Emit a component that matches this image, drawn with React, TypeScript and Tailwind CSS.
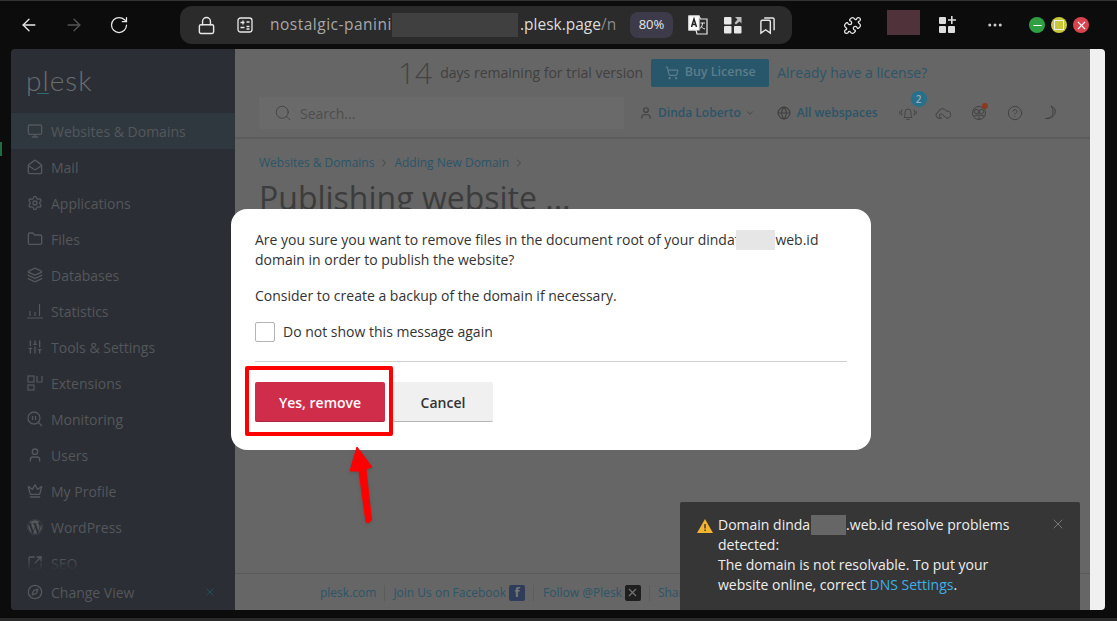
import {
  ArrowLeft,
  ArrowRight,
  RotateCw,
  Lock,
  Puzzle,
  Ellipsis,
  Minus,
  X,
  Monitor,
  MailOpen,
  Settings,
  Folder,
  Layers,
  SlidersVertical,
  User,
  Crown,
  Compass,
  Search,
  ShoppingCart,
  ChevronDown,
  ChevronRight,
  Globe,
  CircleHelp,
  SquareArrowOutUpRight,
} from "lucide-react";
import { FaWordpress } from "react-icons/fa";

const fontStack = "font-['Open_Sans','Noto_Sans',sans-serif]";

function StatsIcon() {
  return (
    <svg viewBox="0 0 16 16" className="w-4 h-4" fill="none" stroke="currentColor" strokeWidth="1.2">
      <path d="M0 15h16M3 13V8M8 13V9M12.500 13V1" />
    </svg>
  );
}

function ExtIcon() {
  return (
    <svg viewBox="0 0 16 16" className="w-4 h-4" fill="none" stroke="currentColor" strokeWidth="1.2">
      <rect x="1" y="1" width="6" height="6" />
      <rect x="1" y="10" width="6" height="5" />
      <path d="M10 1v6h5V1" />
    </svg>
  );
}

function MonitorSearch() {
  return (
    <svg viewBox="0 0 16 16" className="w-4 h-4" fill="none" stroke="currentColor" strokeWidth="1.300">
      <circle cx="7" cy="7" r="6" />
      <path d="M11.500 11.500 15 15M5.500 5v4M8.500 5v4" />
    </svg>
  );
}

function BellIcon() {
  return (
    <svg viewBox="0 0 18 16" className="w-[18px] h-4" fill="none" stroke="currentColor" strokeWidth="1">
      <path d="M5 12.500c1-1.500 1-3 1-5.500a3 3 0 0 1 6 0c0 2.500 0 4 1 5.500zM7.500 14.500h3" />
      <path d="M3 4.500C2 6.500 2 8.500 3 10.500M15 4.500c1 2 1 4 0 6M1 6c-.5 1-.5 2.500 0 3.500M17 6c.5 1 .5 2.500 0 3.500" />
    </svg>
  );
}

function CloudIcon() {
  return (
    <svg viewBox="0 0 18 14" className="w-[17px] h-[14px]" fill="none" stroke="currentColor" strokeWidth="1">
      <path d="M4 12.500a3.200 3.200 0 0 1-.5-6.300A4.500 4.500 0 0 1 12 5a3.800 3.800 0 0 1 1.500 7.500C10 12.500 9 8 6 8c-2 0-2 4.500 1 4.500z" />
    </svg>
  );
}

function OwlIcon() {
  return (
    <svg viewBox="0 0 16 16" className="w-4 h-4" fill="none" stroke="currentColor" strokeWidth="1">
      <circle cx="8" cy="8" r="6.500" />
      <circle cx="5.500" cy="6.500" r="2.200" />
      <circle cx="10.500" cy="6.500" r="2.200" />
      <path d="M8 8.500v6M3 11l4-1M13 11l-4-1" />
    </svg>
  );
}

function CrescentIcon() {
  return (
    <svg viewBox="0 0 16 16" className="w-4 h-4" fill="none" stroke="currentColor" strokeWidth="1">
      <path d="M9 1c3.500 1.500 5 4 4 7.500-1 3-4.500 5.500-9.500 5 4 0 7-2 7.500-5.500C11.300 5.500 10.500 3 9 1z" />
    </svg>
  );
}

const menu = [
  { label: "Mail", icon: <MailOpen size={16} /> },
  { label: "Applications", icon: <Settings size={16} /> },
  { label: "Files", icon: <Folder size={16} /> },
  { label: "Databases", icon: <Layers size={16} /> },
  { label: "Statistics", icon: <StatsIcon /> },
  { label: "Tools & Settings", icon: <SlidersVertical size={16} /> },
  { label: "Extensions", icon: <ExtIcon /> },
  { label: "Monitoring", icon: <MonitorSearch /> },
  { label: "Users", icon: <User size={16} /> },
  { label: "My Profile", icon: <Crown size={16} /> },
  { label: "WordPress", icon: <FaWordpress size={16} /> },
  { label: "SEO", icon: <SquareArrowOutUpRight size={16} /> },
];

function BrowserBar() {
  return (
    <div className="h-[49px] shrink-0 flex items-center text-[#e8e8e8] border-t border-[#333]">
      <ArrowLeft size={20} strokeWidth={1.6} className="ml-[19px]" />
      <ArrowRight size={20} strokeWidth={1.6} className="ml-[25px] text-[#555]" />
      <RotateCw size={20} strokeWidth={1.5} className="ml-[25px]" />
      <div className="ml-[51px] w-[612px] h-[38px] rounded-xl bg-[#2b2b2b] flex items-center">
        <Lock size={19} strokeWidth={1.8} className="ml-[17px]" />
        <svg viewBox="0 0 16 16" className="w-4 h-4 ml-[21px]" fill="none" stroke="currentColor" strokeWidth="1.300">
          <rect x="1" y="1" width="14" height="14" rx="2.500" />
          <path d="M3.500 5.500h4M6 3.500v4M9.500 5h3M3.500 10.500h4M9.500 9.500h3M9.500 12h3" />
        </svg>
        <span className="ml-[17px] text-[15.500px] tracking-[0.5px] text-[#a8a8a8] w-[122px] whitespace-nowrap">nostalgic-panini</span>
        <div className="w-[126px] h-6 bg-[#404040]" />
        <span className="ml-[2px] text-[15.500px] text-[#dcdcdc] whitespace-nowrap">.plesk.page</span>
        <span className="text-[15.500px] text-[#8a8a8a] whitespace-nowrap w-[24px] overflow-hidden">/n</span>
        <div className="w-[43px] h-[26px] rounded-lg bg-[#3d3b4a] flex items-center justify-center text-[13px] text-[#e6e6e6] ml-[5px]">
          80%
        </div>
        <svg viewBox="0 0 20 20" className="w-5 h-5 ml-[15px]" fill="none" stroke="currentColor" strokeWidth="1.200">
          <path d="M1 1h10l1.500 3H19v15H9l-1-4H1z" fill="#2b2b2b" />
          <path d="M1 1h10v14H1z" fill="#fff" />
          <path d="M3.500 12 6 4l2.500 8M4.500 9.500h3" stroke="#222" strokeWidth="1.500" />
          <path d="M12.500 8h4.500M14.500 8c0 3-1.500 5-3 6M13 11c1 1.500 2 2.500 4 3" strokeWidth="1" />
        </svg>
        <svg viewBox="0 0 18 18" className="w-[18px] h-[18px] ml-[16px]" fill="currentColor">
          <rect x="0" y="1" width="7.500" height="7.500" rx="1" />
          <rect x="0" y="10" width="7.500" height="7.500" rx="1" />
          <rect x="10" y="10" width="7.500" height="7.500" rx="1" />
          <path d="M11 1h6.500v6.500L15.500 5.500 12 8.500 10.500 7 13.500 3.500z" fill="#bbb" />
        </svg>
        <svg viewBox="0 0 18 20" className="w-[17px] h-[19px] ml-[17px]" fill="none" stroke="currentColor" strokeWidth="1.500">
          <path d="M2 18V6a1.500 1.500 0 0 1 1.500-1.500h7A1.500 1.500 0 0 1 12 6v12l-5-3.500z" />
          <path d="M5.500 2h9A1.500 1.500 0 0 1 16 3.500V15" />
        </svg>
      </div>
      <Puzzle size={19} strokeWidth={1.6} className="ml-[51px]" />
      <div className="ml-[25px] w-[33px] h-[25px] bg-[#50333a] -mt-[6px]" />
      <svg viewBox="0 0 18 18" className="w-[18px] h-[18px] ml-[18px] text-[#ddd]" fill="currentColor">
        <rect x="1" y="1" width="7" height="7" rx="1" />
        <rect x="1" y="10" width="7" height="7" rx="1" />
        <rect x="10" y="10" width="7" height="7" rx="1" />
        <path d="M13 0h1.600v3.200H18v1.600h-3.400V8H13V4.800H10V3.200h3z" />
      </svg>
      <Ellipsis size={18} className="ml-[30px] text-[#ccc]" />
      <div className="ml-[25px] w-4 h-4 rounded-full bg-[#2ea043] flex items-center justify-center text-white">
        <Minus size={13} />
      </div>
      <div className="ml-[6px] w-4 h-4 rounded-full bg-[#c8c83a] flex items-center justify-center">
        <div className="w-[10px] h-[10px] border border-[#eee]" />
      </div>
      <div className="ml-[6px] w-4 h-4 rounded-full bg-[#d9434e] flex items-center justify-center text-white">
        <X size={13} />
      </div>
    </div>
  );
}

function Sidebar() {
  return (
    <aside className="w-[224px] shrink-0 bg-[#2b2e34] flex flex-col rounded-tl rounded-bl overflow-hidden text-[#54575b]">
      <div className="h-[64px] shrink-0 pl-[15px] pt-[10px] relative">
        <span className="text-[28px] font-light tracking-[1px] text-[#6a6d71] font-['Lato',sans-serif]">plesk</span>
        <div className="absolute left-[26px] top-[44px] w-[12px] h-[1px] bg-[#2f6b73]" />
      </div>
      <nav className="flex-1 overflow-hidden text-[14px] relative">
        <div className="h-9 flex items-center gap-[8px] pl-[16px] bg-[#30383f]">
          <Monitor size={16} />
          <span>Websites &amp; Domains</span>
        </div>
        {menu.map((item) => (
          <div key={item.label} className="h-9 flex items-center gap-[8px] pl-[16px]">
            {item.icon}
            <span>{item.label}</span>
          </div>
        ))}
        <div className="absolute left-0 right-0 bottom-0 h-3 bg-gradient-to-b from-transparent to-[#2b2e34]" />
      </nav>
      <div className="h-10 pt-[4px] shrink-0 flex items-center gap-[8px] pl-[16px] pr-[19px] text-[14px] bg-[#2b2e34]">
        <Compass size={16} />
        <span className="flex-1">Change View</span>
        <X size={12} className="text-[#25505c]" />
      </div>
    </aside>
  );
}

function Main() {
  return (
    <main className="flex-1 bg-[#666] flex flex-col text-[#404040] overflow-hidden">
      <div className="h-[41px] pt-[6px] flex items-center gap-2 shrink-0 pl-[163px]">
        <span className="text-[30px] font-light text-[#444]">14</span>
        <span className="text-[14px]">days remaining for trial version</span>
        <div className="w-[118px] h-7 bg-[#28566a] rounded-[2px] flex items-center justify-center gap-[6px] text-[#5c7d8b] text-[12.500px] font-semibold">
          <ShoppingCart size={14} />
          Buy License
        </div>
        <span className="text-[#2b5568] text-[14px]">Already have a license?</span>
      </div>
      <div className="h-[49px] pb-[1px] border-b-2 border-[#5c5c5c] flex items-center pl-[24px] shrink-0">
        <div className="w-[365px] h-8 bg-[#6a6a6a] flex items-center gap-[8px] pl-[15px] text-[14px] text-[#4d4d4d]">
          <Search size={18} strokeWidth={1.3} className="text-[#444]" />
          Search...
        </div>
        <User size={14} className="ml-[15px]" />
        <span className="ml-[5px] text-[12px] font-semibold text-[#2b5568]">Dinda Loberto</span>
        <ChevronDown size={10} className="ml-[4px]" />
        <Globe size={14} className="ml-[22px]" />
        <span className="ml-[6px] text-[12px] font-semibold text-[#2b5568]">All webspaces</span>
        <div className="relative ml-[21px] text-[#454545]">
          <BellIcon />
          <div className="absolute -top-[14px] left-[12px] w-4 h-4 rounded-full bg-[#28708a] text-[#9ab] text-[10px] font-semibold flex items-center justify-center">
            2
          </div>
        </div>
        <div className="ml-[18px]">
          <CloudIcon />
        </div>
        <div className="relative ml-[19px]">
          <OwlIcon />
          <div className="absolute -top-[2px] left-[11px] w-[6px] h-[6px] rounded-full bg-[#8a3a1e]" />
        </div>
        <CircleHelp size={16} strokeWidth={1.4} className="ml-[20px]" />
        <div className="ml-[19px]">
          <CrescentIcon />
        </div>
      </div>
      <div className="pl-[24px] pt-[15px] flex-1 overflow-hidden">
        <div className="flex items-center gap-[4px] text-[12px] text-[#2b5568]">
          Websites &amp; Domains
          <ChevronRight size={12} className="text-[#444]" />
          Adding New Domain
          <ChevronRight size={12} className="text-[#444]" />
        </div>
        <h1 className="mt-[4px] text-[32px] leading-[44px] text-[#3c3c3c]">Publishing website ...</h1>
      </div>
      <div className="h-[37px] pt-[1px] shrink-0 border-t border-[#5a5a5a] flex items-center pl-[85px] text-[12px] text-[#2b5568] whitespace-nowrap">
        <span>plesk.com</span>
        <div className="w-px h-4 bg-[#5c5c5c] mx-[8px]" />
        <span>Join Us on Facebook</span>
        <div className="w-4 h-4 ml-[3px] bg-[#2f3d5a] rounded-[2px] text-[#777] text-[13px] font-bold flex items-center justify-center">
          f
        </div>
        <div className="w-px h-4 bg-[#5c5c5c] mx-[8px]" />
        <span className="ml-[1px]">Follow @Plesk</span>
        <div className="w-4 h-4 ml-[3px] bg-[#1f1f1f] rounded-[2px] text-[#777] flex items-center justify-center">
          <X size={13} />
        </div>
        <div className="w-px h-4 bg-[#5c5c5c] mx-[8px]" />
        <span>Share</span>
      </div>
    </main>
  );
}

function Modal() {
  return (
    <div className="absolute left-[231px] top-[209px] w-[640px] h-[241px] bg-white rounded-2xl pl-[24px] pr-[24px] pt-[21px] text-[14px] leading-5 text-[#333]">
      <div className="whitespace-nowrap flex">
        Are you sure you want to remove files in the document root of your dindaf
        <span className="w-[39px] h-5 -ml-[3px] bg-[#e6e6e6] inline-block" />
        web.id
      </div>
      <p>domain in order to publish the website?</p>
      <p className="mt-4">Consider to create a backup of the domain if necessary.</p>
      <label className="mt-[16px] flex items-center gap-2">
        <span className="w-5 h-5 border border-[#b5b5b5] rounded-[2px] bg-white" />
        Do not show this message again
      </label>
      <div className="mt-[19px] border-t border-[#d0d0d0]" />
      <div className="mt-5 flex gap-2">
        <button className="w-[130px] h-10 pt-[3px] rounded-[2px] bg-[#d02d4b] border-b border-[#a82640] text-white font-semibold">
          Yes, remove
        </button>
        <button className="w-[100px] h-10 pt-[3px] rounded-[2px] bg-[#f0f0f0] border-b border-[#b5b5b5] text-[#333] font-semibold">
          Cancel
        </button>
      </div>
    </div>
  );
}

function Toast() {
  return (
    <div className="absolute left-[680px] top-[502px] w-[400px] h-[108px] bg-[#363636] rounded-t-[2px] text-[14px] leading-5 text-[#eee] pl-[38px] pt-[13px] pr-[50px]">
      <svg viewBox="0 0 16 14" className="absolute left-[17px] top-[17px] w-4 h-[14px]">
        <path d="M8 0 16 14H0z" fill="#f5b32f" />
        <path d="M8 5v4.500M8 10.500v1.500" stroke="#363636" strokeWidth="1.400" />
      </svg>
      <div className="flex whitespace-nowrap">
        Domain dinda
        <span className="w-[35px] h-5 ml-[1px] bg-[#666] inline-block" />
        .web.id resolve problems
      </div>
      <p>detected:</p>
      <p>The domain is not resolvable. To put your</p>
      <p>
        website online, correct <span className="text-[#3fb0e6]">DNS Settings</span>.
      </p>
      <X size={16} strokeWidth={1.2} className="absolute left-[370px] top-[14px] text-[#888]" />
    </div>
  );
}

export default function App() {
  return (
    <div className={`relative w-[1117px] h-[621px] bg-[#0c0c0c] overflow-hidden flex flex-col ${fontStack}`}>
      <BrowserBar />
      <div className="flex h-[561px] shrink-0 ml-[11px] w-[1094px]">
        <Sidebar />
        <Main />
        <div className="w-[15px] shrink-0 bg-[#f0f0f0] rounded-tr rounded-br" />
      </div>
      <div className="mt-[8px] h-[3px] bg-[#2a2a2a]" />
      <Modal />
      <Toast />
      {/* red annotation drawn over the screenshot */}
      <div className="absolute left-[245px] top-[366px] w-[148px] h-[70px] border-[4px] border-[#f00] rounded-[2px]" />
      <svg className="absolute left-[340px] top-[440px] drop-shadow" width="40" height="90" viewBox="0 0 40 90">
        <path d="M17 7 L32 27 L26 29 L31.500 80 Q29 84 26 82 L19 31 L10 31 Z" fill="#f00" stroke="#f00" strokeWidth="1" strokeLinejoin="round" />
      </svg>
      <div className="absolute left-0 top-[142px] w-[2px] h-[14px] bg-[#1f6b45]" />
    </div>
  );
}
